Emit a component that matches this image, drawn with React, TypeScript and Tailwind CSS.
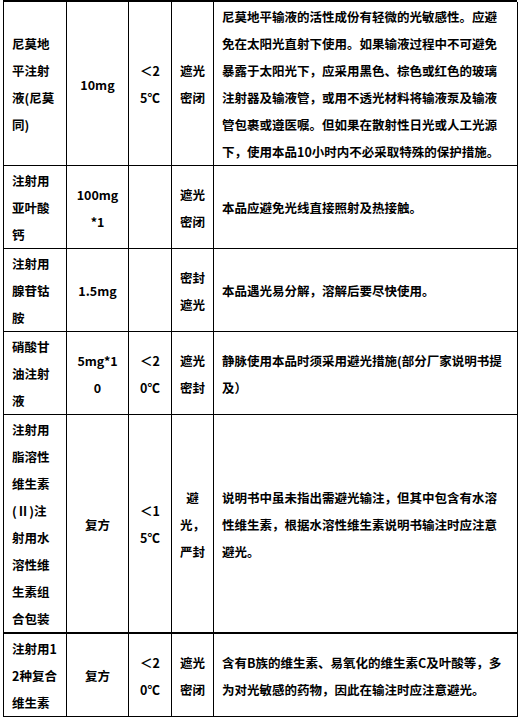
import React from "react";

type Row = {
  name: string[];
  spec: string[];
  temp: string[];
  store: string[];
  desc: string[];
  thick?: boolean;
};

const rows: Row[] = [
  {
    name: ["尼莫地", "平注射", "液(尼莫", "同)"],
    spec: ["10mg"],
    temp: ["＜2", "5℃"],
    store: ["遮光", "密闭"],
    desc: [
      "尼莫地平输液的活性成份有轻微的光敏感性。应避",
      "免在太阳光直射下使用。如果输液过程中不可避免",
      "暴露于太阳光下，应采用黑色、棕色或红色的玻璃",
      "注射器及输液管，或用不透光材料将输液泵及输液",
      "管包裹或遵医嘱。但如果在散射性日光或人工光源",
      "下，使用本品10小时内不必采取特殊的保护措施。",
    ],
  },
  {
    name: ["注射用", "亚叶酸", "钙"],
    spec: ["100mg", "*1"],
    temp: [],
    store: ["遮光", "密闭"],
    desc: ["本品应避免光线直接照射及热接触。"],
  },
  {
    name: ["注射用", "腺苷钴", "胺"],
    spec: ["1.5mg"],
    temp: [],
    store: ["密封", "遮光"],
    desc: ["本品遇光易分解，溶解后要尽快使用。"],
  },
  {
    name: ["硝酸甘", "油注射", "液"],
    spec: ["5mg*1", "0"],
    temp: ["＜2", "0℃"],
    store: ["遮光", "密封"],
    desc: ["静脉使用本品时须采用避光措施(部分厂家说明书提", "及）"],
  },
  {
    name: ["注射用", "脂溶性", "维生素", "(Ⅱ)注", "射用水", "溶性维", "生素组", "合包装"],
    spec: ["复方"],
    temp: ["＜1", "5℃"],
    store: ["避", "光，", "严封"],
    desc: [
      "说明书中虽未指出需避光输注，但其中包含有水溶",
      "性维生素，根据水溶性维生素说明书输注时应注意",
      "避光。",
    ],
    thick: true,
  },
  {
    name: ["注射用1", "2种复合", "维生素"],
    spec: ["复方"],
    temp: ["＜2", "0℃"],
    store: ["遮光", "密闭"],
    desc: [
      "含有B族的维生素、易氧化的维生素C及叶酸等，多",
      "为对光敏感的药物，因此在输注时应注意避光。",
    ],
    thick: true,
  },
];

function Lines({ lines }: { lines: string[] }) {
  return (
    <div>
      {lines.map((l, i) => (
        <div key={i} className="whitespace-nowrap leading-[27px]">
          {l}
        </div>
      ))}
    </div>
  );
}

export default function App() {
  return (
    <div
      className="w-[522px] h-[717px] bg-white text-[12.5px] font-semibold text-black"
      style={{ fontFamily: '"Noto Sans CJK SC", "Noto Sans", sans-serif' }}
    >
      <div className="ml-[3px] w-[514px] border-t-2 border-l border-black grid grid-cols-[63px_62px_43px_42px_304px]">
        {rows.map((r, i) => {
          const bb = r.thick ? "border-b-2" : "border-b";
          return (
            <React.Fragment key={i}>
              <div className={`border-r border-black ${bb} flex items-center pl-[8px] pt-px`}>
                <Lines lines={r.name} />
              </div>
              <div className={`border-r border-black ${bb} flex items-center justify-center text-center pt-px`}>
                <Lines lines={r.spec} />
              </div>
              <div className={`border-r border-black ${bb} flex items-center justify-center text-center pt-px`}>
                <Lines lines={r.temp} />
              </div>
              <div className={`border-r border-black ${bb} flex items-center justify-center text-center pt-px`}>
                <Lines lines={r.store} />
              </div>
              <div className={`border-r border-black ${bb} flex items-center pl-[8px] pt-px`}>
                <Lines lines={r.desc} />
              </div>
            </React.Fragment>
          );
        })}
      </div>
    </div>
  );
}
